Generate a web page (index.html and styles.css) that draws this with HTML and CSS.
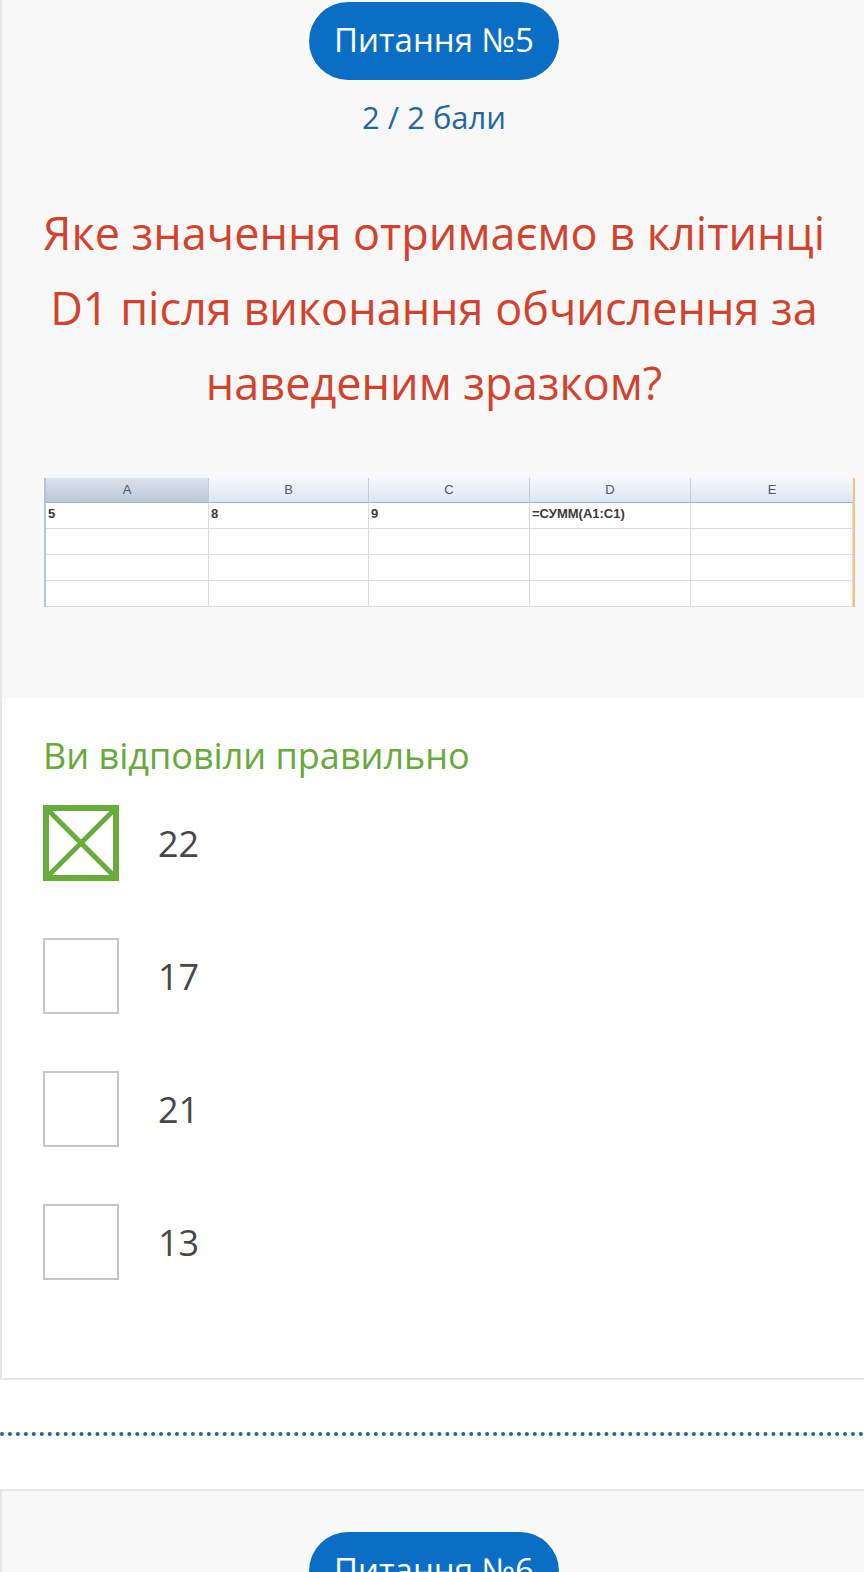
FILE: index.html
```html
<!DOCTYPE html>
<html lang="uk">
<head>
    <meta charset="UTF-8">
    <meta name="viewport" content="width=device-width, initial-scale=1.0">
    <title>Тест</title>
    <link rel="stylesheet" href="styles.css">
</head>
<body>

<div class="page">

    <div class="card">
        <div class="card-top">
            <div class="pill">Питання №5</div>
            <div class="score">2 / 2 бали</div>
            <h2 class="question">Яке значення отримаємо в клітинці D1 після виконання обчислення за наведеним зразком?</h2>

            <div class="sheet">
                <div class="sh-head sel">A</div>
                <div class="sh-head">B</div>
                <div class="sh-head">C</div>
                <div class="sh-head">D</div>
                <div class="sh-head last">E</div>

                <div class="sh-cell">5</div>
                <div class="sh-cell">8</div>
                <div class="sh-cell">9</div>
                <div class="sh-cell">=СУММ(A1:C1)</div>
                <div class="sh-cell"></div>

                <div class="sh-cell"></div><div class="sh-cell"></div><div class="sh-cell"></div><div class="sh-cell"></div><div class="sh-cell"></div>
                <div class="sh-cell"></div><div class="sh-cell"></div><div class="sh-cell"></div><div class="sh-cell"></div><div class="sh-cell"></div>
                <div class="sh-cell"></div><div class="sh-cell"></div><div class="sh-cell"></div><div class="sh-cell"></div><div class="sh-cell"></div>
            </div>
        </div>

        <div class="card-body">
            <div class="verdict">Ви відповіли правильно</div>

            <div class="answer">
                <span class="box checked">
                    <svg viewBox="0 0 76 76" width="76" height="76">
                        <line x1="4" y1="4" x2="72" y2="72" />
                        <line x1="72" y1="4" x2="4" y2="72" />
                    </svg>
                </span>
                <span class="answer-text">22</span>
            </div>
            <div class="answer">
                <span class="box"></span>
                <span class="answer-text">17</span>
            </div>
            <div class="answer">
                <span class="box"></span>
                <span class="answer-text">21</span>
            </div>
            <div class="answer">
                <span class="box"></span>
                <span class="answer-text">13</span>
            </div>
        </div>
    </div>

    <div class="divider"></div>

    <div class="card">
        <div class="card-top">
            <div class="pill">Питання №6</div>
        </div>
    </div>

</div>

</body>
</html>
```

FILE: styles.css
```css
body {
    margin: 0;
    font-family: "Open Sans", Lato, sans-serif;
    background: white;
    overflow: hidden;
}
.page {
    margin-top: -41px;
}
.card {
    border: 2px solid #e6e6e6;
    border-right: none;
    margin-right: -2px;
}
.card-top {
    background: #f8f8f8;
    padding: 41px 0 91px;
    text-align: center;
}
.pill {
    display: inline-block;
    background: #0a6ec4;
    color: white;
    font-size: 33px;
    padding: 0 25px;
    height: 78px;
    line-height: 76px;
    border-radius: 40px;
}
.score {
    color: #23679f;
    font-size: 31px;
    margin-top: 17px;
    line-height: 40px;
}
.question {
    color: #d1432c;
    font-weight: normal;
    font-size: 45px;
    line-height: 75px;
    margin: 58px 14px 0;
}
.sheet {
    display: grid;
    grid-template-columns: 163px 160px 161px 161px 162px;
    margin: 58px 0 0 42px;
    width: 807px;
    border-left: 2px solid #b9c4d2;
    border-right: 2px solid #f0c27a;
    font-family: "Liberation Sans", Arial, sans-serif;
    text-align: left;
}
.sh-head {
    height: 24px;
    line-height: 24px;
    text-align: center;
    font-size: 13px;
    color: #4d5663;
    background: linear-gradient(#f4f8fc, #dde7f1);
    border-right: 1px solid #c3ccd7;
    border-bottom: 1px solid #9eb1c7;
}
.sh-head.sel {
    background: linear-gradient(#dbe3ec, #b9c8d8);
}
.sh-head.last {
    border-right: none;
}
.sh-cell {
    height: 26px;
    line-height: 22px;
    font-size: 13px;
    font-weight: bold;
    color: #3a3a3a;
    padding-left: 2px;
    background: white;
    border-right: 1px solid #d8dde3;
    border-bottom: 1px solid #d8dde3;
    box-sizing: border-box;
}
.card-body {
    background: white;
    padding: 36px 0 98px 41px;
}
.verdict {
    color: #67a93a;
    font-size: 36px;
    line-height: 44px;
    margin-bottom: 27px;
}
.answer {
    display: flex;
    align-items: center;
    gap: 39px;
    margin-bottom: 57px;
}
.answer:last-child {
    margin-bottom: 0;
}
.box {
    display: block;
    width: 76px;
    height: 76px;
    box-sizing: border-box;
    border: 2px solid #c6c6c6;
}
.box.checked {
    border: none;
}
.box svg {
    display: block;
    stroke: #68ad3c;
    stroke-width: 5;
}
.box.checked svg {
    outline: 6px solid #68ad3c;
    outline-offset: -6px;
}
.answer-text {
    font-size: 36px;
    color: #474747;
}
.divider {
    border-top: 4px dotted #2b5f93;
    margin: 52px 0 53px;
}
```
